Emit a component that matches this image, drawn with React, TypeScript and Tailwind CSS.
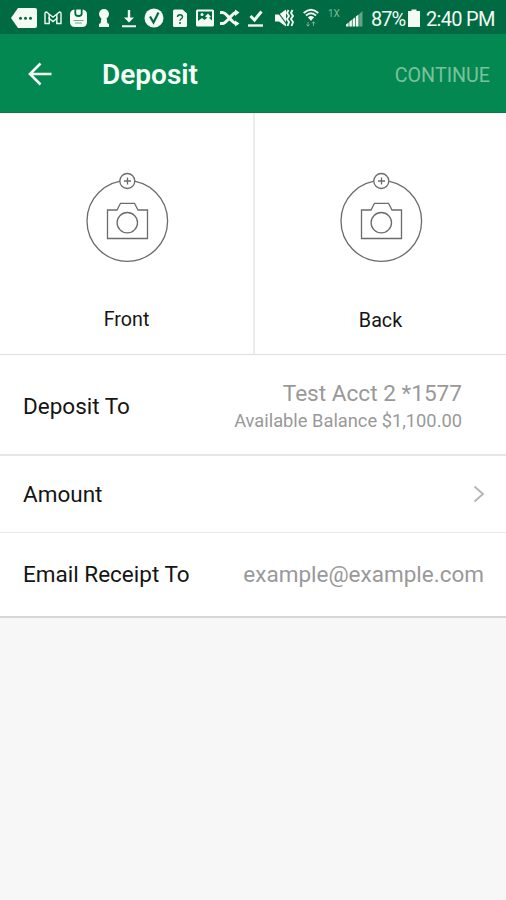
import React from 'react';
import clsx from 'clsx';

function StatusIcons() {
  return (
    <div className="flex items-center text-[#f4faf4]">
      <svg className="ml-[10px] w-[28px] h-5" viewBox="0 0 28 20" fill="currentColor">
        <path d="M8 0h17a2 2 0 0 1 2 2v16a2 2 0 0 1-2 2H8L1 10z" />
        <g fill="#006b42">
          <circle cx="10.5" cy="10.2" r="1.5" />
          <circle cx="15.5" cy="10.2" r="1.5" />
          <circle cx="20.5" cy="10.2" r="1.5" />
        </g>
      </svg>
      {/* mail */}
      <svg className="ml-[6px] w-[18px] h-5" viewBox="0 0 18 20" fill="none" stroke="currentColor" strokeWidth="1.4">
        <path d="M1 5.2Q1 4 2.5 4L9 9.2 15.5 4Q17 4 17 5.2V15.5H12.8V10.5L9 13.5 5.2 10.5V15.5H1z" />
        <path d="M5.2 6v5M12.8 6v5" />
      </svg>
      <svg className="ml-[7px] w-[19px] h-5" viewBox="0 0 19 20">
        <path d="M5 1.5h9q4 1 4 5V14q0 5-5 5H6q-5 0-5-5V6.5q0-4 4-5z" fill="currentColor" />
        <path d="M6.3 1v4.5q0 2.5 3.2 2.5t3.2-2.5V1" fill="none" stroke="#006b42" strokeWidth="1.8" />
        <path d="M4.5 12.5h10M6 15h7" stroke="#6fae90" strokeWidth="1" />
      </svg>
      <svg className="ml-[10px] w-[12px] h-5" viewBox="0 0 12 20" fill="currentColor">
        <circle cx="6" cy="6" r="5" />
        <path d="M3.5 9h5l.8 6 1.7 1v3H1v-3l1.7-1z" />
      </svg>
      <svg className="ml-[12px] w-[14px] h-5" viewBox="0 0 14 20" fill="currentColor">
        <path d="M5.8 2h2.4v7.5H12l-5 5-5-5h3.800zM0 17.3h14v2H0z" />
      </svg>
      <svg className="ml-[8px] w-[20px] h-5" viewBox="0 0 20 20">
        <circle cx="10" cy="10" r="9.5" fill="currentColor" />
        <path d="M6 8.5l3.5 6L14.5 4.5" fill="none" stroke="#006b42" strokeWidth="2.2" />
      </svg>
      <svg className="ml-[9px] w-[14px] h-5" viewBox="0 0 14 20">
        <path d="M1.5 1.5H9.5L14 5.5v12q0 1.5-1.5 1.5h-11Q0 19 0 17.5v-14.5Q0 1.5 1.5 1.5z" fill="currentColor" />
        <path d="M4.5 9q0-2.2 2.5-2.2T9.5 9Q9.5 10 8 11q-1 .7-1 1.7" fill="none" stroke="#006b42" strokeWidth="1.4" />
        <circle cx="7" cy="15" r="1" fill="#006b42" />
      </svg>
      <svg className="ml-[9px] w-[18px] h-5" viewBox="0 0 18 20">
        <rect x="0" y="1.5" width="18" height="17" rx="1.5" fill="currentColor" />
        <path d="M2 3.500h14v9l-4-3.500-3.500 3L6 10 2 13z" fill="#006b42" />
        <circle cx="6" cy="6.5" r="1.5" fill="currentColor" />
        <path d="M9 8.500L12 5.500l3 3.500-3 1z" fill="currentColor" />
      </svg>
      <svg className="ml-[6px] w-[20px] h-5" viewBox="0 0 20 20" fill="none" stroke="currentColor" strokeWidth="3">
        <path d="M0 4.5H2.5C7 4.5 12 15.5 16 15.5h1.5M0 15.5H2.5C7 15.5 12 4.5 16 4.5h1.5" />
        <path d="M15 1.5L19.5 4.5 15 8zM15 12.5L19.5 15.5 15 18.5z" fill="currentColor" stroke="none" />
      </svg>
      <svg className="ml-[8px] w-[16px] h-5" viewBox="0 0 16 20" fill="none" stroke="currentColor">
        <path d="M2.5 8L6.5 12 13.5 3.5" strokeWidth="2.9" />
        <path d="M0 17.5h15" strokeWidth="2.4" />
      </svg>
      {/* vibrate / muted */}
      <svg className="ml-[11px] w-[20px] h-5" viewBox="0 0 20 20">
        <path d="M0 6.5h4l7-5v17l-7-5H0z" fill="currentColor" />
        <path d="M1 1.5L13 18" stroke="#006b42" strokeWidth="1.2" />
        <path d="M13.500 2l-1.500 3 2 3-2 3 2 3-1.500 4M17.500 2l-1.500 3 2 3-2 3 2 3-1.500 4" fill="none" stroke="currentColor" strokeWidth="1.9" />
      </svg>
      <svg className="ml-[8px] w-[16px] h-5" viewBox="0 0 16 20" fill="none" stroke="currentColor">
        <path d="M.7 5Q8-1.5 15.3 5M3 7.500Q8 3 13 7.500M5.500 10Q8 8 10.500 10" strokeWidth="1.8" />
        <path d="M5.8 10h4.4L8 13z" fill="currentColor" stroke="none" />
        <path d="M5 14v4M3.500 16.500L5 18.200 6.500 16.500M10.500 18v-4M9 15.500L10.500 13.700 12 15.500" strokeWidth="1" opacity=".45" />
      </svg>
      <span className="ml-[9px] mb-[8px] w-[12px] text-[10px] leading-none text-[#7cb89c]">1X</span>
      <svg className="ml-[6px] w-[18px] h-5" viewBox="0 0 18 20" fill="currentColor">
        <path d="M0 18.500v-2l2.600-2v4zM3.300 18.500v-4.700l2.600-2v6.700zM6.600 18.500v-7.300l2.600-2v9.300zM9.900 18.500V8.600l2.600-2v11.900z" />
        <path d="M13.200 18.500V6l3.300-3v15.500z" opacity=".4" />
      </svg>
    </div>
  );
}

function StatusBar() {
  return (
    <div className="h-[34px] flex items-center bg-[#006b42] text-[#f4faf4] pt-px overflow-hidden whitespace-nowrap">
      <StatusIcons />
      <span className="ml-[7px] w-[35px] text-[20px] tracking-[-1px] leading-none pt-[3px]">87%</span>
      <svg className="ml-[2px] w-[12px] h-5" viewBox="0 0 12 20" fill="currentColor">
        <path d="M3.5 1.5h5v1.5H12V19H0V3h3.5z" />
      </svg>
      <span className="ml-[6px] text-[20px] tracking-[-0.7px] leading-none pt-[3px]">2:40 PM</span>
    </div>
  );
}

function Header() {
  return (
    <header className="h-[79px] flex items-center bg-[#038851] border-b border-[#047a46] pt-[2px] pl-[28px] pr-[16px]">
      <svg className="w-[24px] h-[24px]" viewBox="0 0 24 24" fill="none" stroke="#f6fff8" strokeWidth="2.6">
        <path d="M23.5 12H2.5M12.5 1.5L2 12l10.5 10.5" />
      </svg>
      <h1 className="ml-[50px] mt-[2px] text-[28px] leading-none font-semibold text-[#f6fff8]">Deposit</h1>
      <span className="ml-auto mt-[3px] text-[19.7px] leading-none text-[#7cc19f]">CONTINUE</span>
    </header>
  );
}

function CameraIcon() {
  return (
    <svg className="w-[84px] h-[92px]" viewBox="0 0 84 92" fill="none" stroke="#6b6b6b" strokeWidth="1.3">
      <circle cx="42.3" cy="49" r="40.3" />
      <path d="M22.5 38H32L35.5 31.3H49.5L53 38H62.5V66.5H22.5z" />
      <circle cx="42.3" cy="50.7" r="10.2" />
      <circle cx="42.3" cy="9" r="7.5" fill="#fff" />
      <path d="M42.5 5.5v7M39 9h7" />
    </svg>
  );
}

interface CheckSideProps {
  label: string;
  className?: string;
  labelClassName?: string;
}

function CheckSide({ label, className, labelClassName }: CheckSideProps) {
  return (
    <button className={clsx('flex flex-col items-center pt-[59px]', className)}>
      <CameraIcon />
      <span className={clsx('text-[19.7px] leading-[20px] text-[#151515]', labelClassName)}>{label}</span>
    </button>
  );
}

export default function App() {
  return (
    <div className="w-full h-[900px] bg-[#f7f7f7] font-['Roboto',sans-serif] overflow-hidden">
      <StatusBar />
      <Header />

      <div className="h-[242px] flex bg-white border-b border-[#dedede]">
        <CheckSide label="Front" className="w-[255px] border-r-2 border-[#ececec]" labelClassName="mt-[46px]" />
        <CheckSide label="Back" className="w-[251px]" labelClassName="mt-[47px]" />
      </div>

      <div className="h-[101px] flex items-center justify-between bg-white border-b-2 border-[#e6e6e6] pt-[4px] pl-[23px] pr-[44px]">
        <span className="text-[22.5px] text-[#151515]">Deposit To</span>
        <div className="flex flex-col items-end text-[#999]">
          <span className="text-[22.6px] leading-[28px]">Test Acct 2 *1577</span>
          <span className="text-[18.3px] leading-[26px]">Available Balance $1,100.00</span>
        </div>
      </div>

      <div className="h-[77px] flex items-center justify-between bg-white border-b border-[#e9e9e9] pl-[23px] pr-[21px]">
        <span className="mt-[2px] text-[22.5px] text-[#151515]">Amount</span>
        <svg className="w-[12px] h-[18px]" viewBox="0 0 12 18" fill="none" stroke="#b3b3b3" strokeWidth="1.8">
          <path d="M1.5 1.5L10 9l-8.500 7.500" />
        </svg>
      </div>

      <div className="h-[85px] flex items-center justify-between bg-white border-b-2 border-[#d6d6d6] pl-[23px] pr-[22px]">
        <span className="text-[22.5px] text-[#151515]">Email Receipt To</span>
        <span className="text-[22.5px] text-[#999]">example@example.com</span>
      </div>
    </div>
  );
}
